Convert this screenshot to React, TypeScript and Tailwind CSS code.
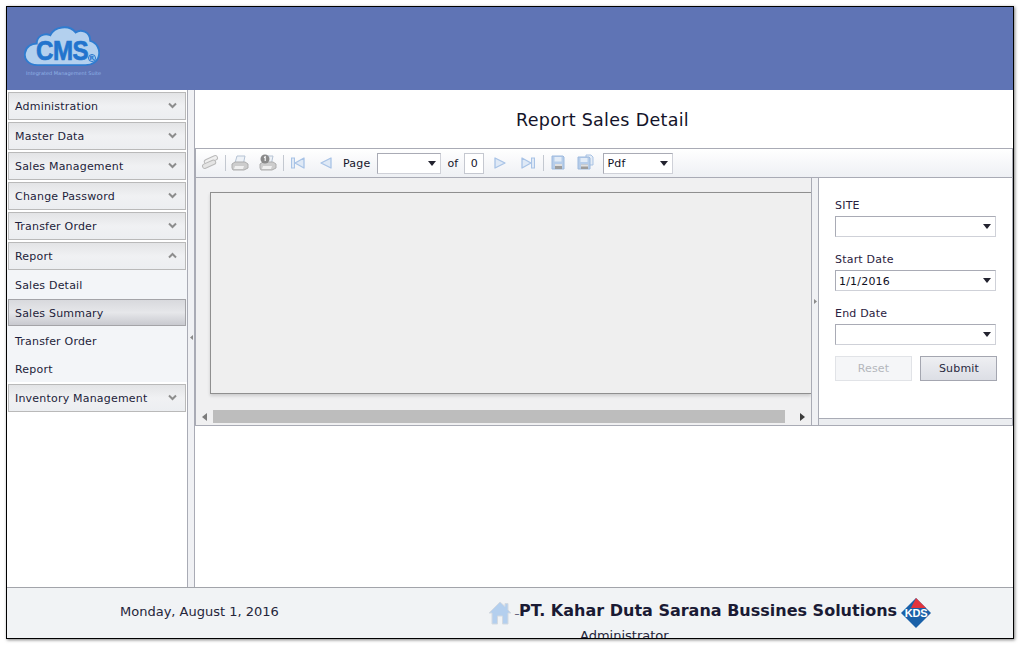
import { ReactNode } from "react";

const FONT = "font-['DejaVu_Sans',sans-serif]";

const Chevron = ({ up = false }: { up?: boolean }) => (
  <svg width="9" height="7" viewBox="0 0 9 7" className="shrink-0 mb-[2px]">
    <path
      d={up ? "M1 5.5 L4.5 2 L8 5.5" : "M1 1.5 L4.5 5 L8 1.5"}
      fill="none"
      stroke="#8d8d8d"
      strokeWidth="2"
    />
  </svg>
);

const MenuHeader = ({ label, open = false }: { label: string; open?: boolean }) => (
  <div className="h-[28px] mx-px mt-[2px] border border-[#b9b9b9] bg-gradient-to-b from-[#e3e4e6] via-[#f0f1f3] to-[#eceef1] flex items-center justify-between pl-[6px] pr-[8px] text-[#1d1d3a]">
    <span className="pt-[2px]">{label}</span>
    <Chevron up={open} />
  </div>
);

const SubItem = ({
  label,
  active = false,
  className = "h-[28px] pt-[4px]",
}: {
  label: string;
  active?: boolean;
  className?: string;
}) =>
  active ? (
    <div className="h-[27px] mx-px border border-[#a4a4a8] bg-gradient-to-b from-[#d8d9dd] via-[#e6e7ea] to-[#c9cad0] flex items-center pl-[6px] pt-[3px] text-[#1d1d3a]">
      {label}
    </div>
  ) : (
    <div className={`flex items-center pl-[8px] text-[#1d1d3a] ${className}`}>{label}</div>
  );

const ToolIcon = ({ w = 20, children }: { w?: number; children: ReactNode }) => (
  <svg width={w} height="18" viewBox={`0 0 ${w} 18`} className="shrink-0">
    {children}
  </svg>
);

const Printer = ({ badge = false }: { badge?: boolean }) => (
  <ToolIcon w={18}>
    <path d="M6 2 H14 L12.5 9 H4 Z" fill="#eef2f7" stroke="#b5c3d4" />
    <path d="M1 10 L4 8 H14 L17 10 V14 L13 16 H2 L1 14 Z" fill="#cdcdcd" stroke="#adadad" />
    <path d="M4 12 H13 L12 15 H3 Z" fill="#f0f0f0" />
    {badge && <circle cx="6" cy="5" r="4.5" fill="#8a8a8a" />}
    {badge && <path d="M5 3.5 L6.2 2.8 V7" stroke="#fff" strokeWidth="1.1" fill="none" />}
  </ToolIcon>
);

const Save = ({ double = false }: { double?: boolean }) => (
  <ToolIcon w={double ? 17 : 16}>
    {double && <path d="M9 1 H14 L16 3 V11 H9 Z" fill="#e4ecf6" stroke="#a9c3e4" />}
    <path d={double ? "M1 3 H12 L13 4 V15 H1 Z" : "M1 2 H12 L13 3 V15 H1 Z"} fill="#b6cdea" stroke="#9dbade" />
    <path d={double ? "M3.5 4 H10.5 V8 H3.5 Z" : "M3.5 3 H10.5 V7.5 H3.5 Z"} fill="#e3ecf7" />
    <path d={double ? "M4 10.5 H11 V15 H4 Z" : "M4 10 H11 V15 H4 Z"} fill="#9c9c9c" />
    <path d={double ? "M4 10.5 H11 V12.5 H4 Z" : "M4 10 H11 V12 H4 Z"} fill="#e0e0e0" />
  </ToolIcon>
);

const Tri = ({ left = false, bar = false }: { left?: boolean; bar?: boolean }) => (
  <ToolIcon w={16}>
    {left ? (
      <path d={bar ? "M14 4 V14 L5 9 Z" : "M13 4 V14 L3 9 Z"} fill="#dfe9f6" stroke="#a8c3e6" strokeWidth="1.3" strokeLinejoin="round" />
    ) : (
      <path d={bar ? "M2 4 V14 L11 9 Z" : "M3 4 V14 L13 9 Z"} fill="#dfe9f6" stroke="#a8c3e6" strokeWidth="1.3" strokeLinejoin="round" />
    )}
    {bar && (
      <rect x={left ? 1.5 : 11.5} y="4" width="3" height="10" fill="#dfe9f6" stroke="#a8c3e6" />
    )}
  </ToolIcon>
);

const Caret = () => (
  <svg width="8" height="5" viewBox="0 0 8 5" className="shrink-0">
    <path d="M0 0 H8 L4 5 Z" fill="#23232f" />
  </svg>
);

const Select = ({ value = "", className }: { value?: string; className: string }) => (
  <div
    className={`h-[21px] border border-[#a9abb5] border-r-[#cfd1d8] border-b-[#cfd1d8] bg-white flex items-center justify-between pl-[3px] pr-[4px] text-[#10101e] ${className}`}
  >
    <span className="pt-[3px]">{value}</span>
    <Caret />
  </div>
);

const Field = ({ label, value, className }: { label: string; value?: string; className?: string }) => (
  <div className={className}>
    <div className="h-[15px] leading-[15px] text-[#2a2140] mb-[3px]">{label}</div>
    <Select value={value} className="w-[161px]" />
  </div>
);

const CmsLogo = () => (
  <div className="relative w-[80px] h-[62px]">
    <svg width="76" height="43" viewBox="0 0 78 46" preserveAspectRatio="none" className="absolute left-0 top-0">
      <path
        d="M14 44 C3 44 0 36 1 31 C2 24 8 21 13 21 C13 13 21 9 27 12 C31 3 46 0 53 9 C58 5 68 8 68 18 C75 20 78 27 77 33 C76 40 70 44 63 44 Z"
        fill="#b3d0ee"
        stroke="#2f7cd0"
        strokeWidth="2"
      />
    </svg>
    <span className="absolute left-[12px] top-[12px] font-['Liberation_Sans',sans-serif] font-bold text-[28px] leading-[30px] tracking-[-0.5px] text-[#2274cd] scale-x-[0.86] origin-left [-webkit-text-stroke:0.7px_#2274cd]">
      CMS
    </span>
    <span className="absolute left-[64px] top-[30px] w-[8px] h-[8px] rounded-full border border-[#2274cd] text-[6px] leading-[6px] text-center text-[#2274cd] font-bold">
      R
    </span>
    <span className="absolute left-[2px] top-[46px] whitespace-nowrap text-[5px] leading-[6px] tracking-normal text-[#8fb1e6]">
      Integrated Management Suite
    </span>
  </div>
);

const KdsLogo = () => (
  <div className="relative w-[30px] h-[30px] shrink-0 ml-[4px]">
    <svg width="30" height="30" viewBox="0 0 30 30" className="absolute inset-0">
      <path d="M15 0 L30 15 L15 30 L0 15 Z" fill="#1a60a8" />
      <path d="M15 0 L25 10 H10 Z" fill="#e2343c" />
    </svg>
    <span className="absolute inset-0 flex items-center justify-center font-['Liberation_Sans',sans-serif] font-bold text-[11px] tracking-[-0.2px] text-white">
      KDS
    </span>
  </div>
);

const HomeIcon = () => (
  <svg width="24" height="24" viewBox="0 0 24 24" className="shrink-0">
    <path
      d="M1 12 L12 1 L17 5.5 V2.5 H20 V9 L23 12 H20 V23 H14.5 V15 H9.5 V23 H4 V12 Z"
      fill="#b4cfee"
      stroke="#d3d9e1"
    />
  </svg>
);

export default function App() {
  return (
    <div className={`${FONT} w-[1020px] h-[645px] bg-white pl-[6px] pt-[6px] text-[11px] tracking-[0.2px] overflow-hidden`}>
      <div className="w-[1008px] h-[633px] border border-black flex flex-col shadow-[1px_1px_3px_rgba(0,0,0,0.5)]">
        {/* top banner */}
        <div className="h-[83px] shrink-0 bg-[#5f74b5] pl-[17px] pt-[17px]">
          <CmsLogo />
        </div>

        <div className="flex-1 flex min-h-0">
          {/* left menu */}
          <div className="w-[180px] shrink-0 bg-white flex flex-col">
            <MenuHeader label="Administration" />
            <MenuHeader label="Master Data" />
            <MenuHeader label="Sales Management" />
            <MenuHeader label="Change Password" />
            <MenuHeader label="Transfer Order" />
            <MenuHeader label="Report" open />
            <div className="bg-[#f3f5f8]">
              <SubItem label="Sales Detail" className="h-[29px] pt-[3px]" />
              <SubItem label="Sales Summary" active />
              <SubItem label="Transfer Order" />
              <SubItem label="Report" />
            </div>
            <MenuHeader label="Inventory Management" />
          </div>

          {/* splitter */}
          <div className="w-[8px] shrink-0 bg-[#f0f1f4] border-x border-[#a9abb5] flex items-center justify-center pb-[3px]">
            <svg width="3" height="5" viewBox="0 0 3 5">
              <path d="M3 0 V5 L0 2.5 Z" fill="#8a8a8a" />
            </svg>
          </div>

          {/* content */}
          <div className="flex-1 min-w-0 flex flex-col bg-white">
            <div className="h-[58px] shrink-0 flex items-center justify-center pr-[3px] pt-[2px] text-[17.5px] tracking-[0.3px] text-[#14142a]">
              Report Sales Detail
            </div>

            <div className="h-[278px] shrink-0 border border-[#a9abb5] flex flex-col">
              {/* toolbar */}
              <div className="h-[29px] shrink-0 border-b border-[#a9abb5] bg-gradient-to-b from-white to-[#eef0f4] flex items-center pl-[5px] text-[#14142a]">
                <ToolIcon w={18}>
                  <rect x="3" y="3.5" width="14" height="4.5" rx="2.2" transform="rotate(-24 10 6)" fill="#efefef" stroke="#b9b9b9" />
                  <rect x="1" y="8" width="14" height="4.5" rx="2.2" transform="rotate(-24 8 10)" fill="#e4e4e4" stroke="#b9b9b9" />
                </ToolIcon>
                <div className="w-px h-[16px] bg-[#c3c8d0] ml-[6px] mr-[5px]" />
                <Printer />
                <div className="w-[10px]" />
                <Printer badge />
                <div className="w-px h-[16px] bg-[#c3c8d0] ml-[6px] mr-[6px]" />
                <Tri left bar />
                <div className="w-[12px]" />
                <Tri left />
                <span className="ml-[9px] mr-[7px] pt-[2px]">Page</span>
                <Select className="w-[64px]" />
                <span className="ml-[6px] mr-[6px] pt-[2px]">of</span>
                <div className="w-[20px] h-[21px] border border-[#c5c8d0] bg-white flex items-center justify-center pt-[2px]">0</div>
                <div className="w-[8px]" />
                <Tri />
                <div className="w-[12px]" />
                <Tri bar />
                <div className="w-px h-[16px] bg-[#c3c8d0] ml-[7px] mr-[7px]" />
                <Save />
                <div className="w-[10px]" />
                <Save double />
                <div className="w-[9px]" />
                <Select value="Pdf" className="w-[70px]" />
              </div>

              <div className="flex-1 flex min-h-0">
                {/* report canvas */}
                <div className="w-[615px] shrink-0 bg-[#f0f0f1] flex flex-col">
                  <div className="flex-1 pl-[14px] pt-[14px]">
                    <div className="h-[202px] border border-r-0 border-[#8f8f8f] bg-[#efefef] shadow-[0_2px_3px_rgba(0,0,0,0.15)]" />
                  </div>
                  <div className="h-[13px] mb-[2px] flex items-center pl-[6px] pr-[6px]">
                    <svg width="5" height="8" viewBox="0 0 5 8" className="shrink-0">
                      <path d="M5 0 V8 L0 4 Z" fill="#7c7c7c" />
                    </svg>
                    <div className="ml-[6px] w-[572px] h-[13px] bg-[#bdbdbd]" />
                    <div className="flex-1" />
                    <svg width="5" height="8" viewBox="0 0 5 8" className="shrink-0">
                      <path d="M0 0 V8 L5 4 Z" fill="#3c3c3c" />
                    </svg>
                  </div>
                </div>

                {/* splitter */}
                <div className="w-[8px] shrink-0 bg-[#f0f1f4] border-x border-[#a9abb5] flex justify-center pt-[121px]">
                  <svg width="3" height="5" viewBox="0 0 3 5" className="shrink-0">
                    <path d="M0 0 V5 L3 2.5 Z" fill="#8a8a8a" />
                  </svg>
                </div>

                {/* parameters */}
                <div className="flex-1 min-w-0 flex flex-col">
                  <div className="h-[241px] shrink-0 bg-white pl-[16px] pt-[20px] border-b border-[#a9abb5]">
                    <Field label="SITE" className="mb-[15px]" />
                    <Field label="Start Date" value="1/1/2016" className="mb-[15px]" />
                    <Field label="End Date" />
                    <div className="flex gap-[8px] mt-[11px]">
                      <div className="w-[77px] h-[25px] border border-[#e1e3e7] bg-[#f5f6f8] flex items-center justify-center pt-[2px] text-[#b4b6bc]">
                        Reset
                      </div>
                      <div className="w-[77px] h-[25px] border border-[#a4a6b0] bg-gradient-to-b from-[#eeeff2] to-[#dcdee5] flex items-center justify-center pt-[2px] pl-px text-[#2a2a40]">
                        Submit
                      </div>
                    </div>
                  </div>
                  <div className="flex-1 bg-[#ebedf0]" />
                </div>
              </div>
            </div>
          </div>
        </div>

        {/* footer */}
        <div className="h-[51px] shrink-0 border-t border-[#a2a4aa] bg-[#f1f3f5] flex overflow-hidden tracking-normal">
          <div className="w-[386px] shrink-0 pl-[113px] pt-[14px] text-[13px] text-[#25253a] h-fit">
            Monday, August 1, 2016
          </div>
          <div className="pl-[95px] flex-1 min-w-0">
            <div className="flex items-start pt-[10px] h-[40px] w-[460px]">
              <div className="mt-[3px]">
                <HomeIcon />
              </div>
              <span className="mt-[7px] ml-[3px] w-[4px] text-[#1c1c4a] text-[8px]">_</span>
              <span className="mt-px font-bold text-[16px] leading-[24px] whitespace-nowrap text-[#1a1a34]">
                PT. Kahar Duta Sarana Bussines Solutions
              </span>
              <KdsLogo />
            </div>
            <div className="pl-[92px] text-[13px] leading-[16px] text-[#25253a] whitespace-nowrap">Administrator</div>
          </div>
        </div>
      </div>
    </div>
  );
}
